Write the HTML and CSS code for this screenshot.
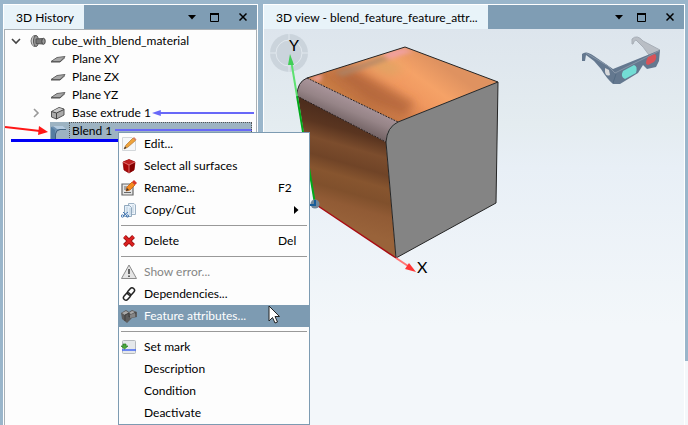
FILE: index.html
```
<!DOCTYPE html>
<html lang="en">
<head>
<meta charset="utf-8">
<title>3D History</title>
<link rel="stylesheet" href="styles.css">
</head>
<body>
<svg class="defs" aria-hidden="true">
  <symbol id="plane" viewBox="0 0 16 16"><path d="M1 10.500 7 6.500 15 5.500 10 10.500Z" fill="#a8a8a8" stroke="#666"/><path d="M1 11H10L15 6.500" fill="none" stroke="#555"/></symbol>
  <symbol id="down" viewBox="0 0 8 5"><path d="M0 0H8L4 4.500Z"/></symbol>
  <symbol id="max" viewBox="0 0 9 9"><path d="M.5 1H8.500V8.500H.5Z" fill="none" stroke="#000"/><path d="M0 1H9" stroke="#000" stroke-width="2"/></symbol>
  <symbol id="close" viewBox="0 0 8 8"><path d="M.5.5 7.500 7.500M7.500.5.5 7.500" stroke="#000" stroke-width="1.500"/></symbol>
</svg>
<main class="workspace">
  <section class="panel history">
    <header class="bar">
      <h2 class="tab">3D History</h2>
      <div class="tools">
        <button aria-label="Options"><svg width="8" height="5"><use href="#down"/></svg></button>
        <button aria-label="Maximize"><svg width="9" height="9"><use href="#max"/></svg></button>
        <button aria-label="Close"><svg width="8" height="8"><use href="#close"/></svg></button>
      </div>
    </header>
    <ul class="tree">
      <li class="root"><svg class="chev" viewBox="0 0 10 16"><path d="M1 6 5 10 9 6" fill="none" stroke="#444" stroke-width="1.600"/></svg>
        <svg class="icon" viewBox="0 0 16 16"><path d="M6 2.500H4Q1 4 1 8T4 13.500H5" fill="#ccc" stroke="#777"/><ellipse cx="6" cy="8" rx="2.500" ry="5.500" fill="#999" stroke="#555"/><path d="M6 6 13 5.500V11L6 10.500Z" fill="#777" stroke="#555"/><ellipse cx="13.500" cy="8.300" rx="1.700" ry="3" fill="#999" stroke="#444"/></svg><span>cube_with_blend_material</span></li>
      <li><span class="chev"></span><svg class="icon"><use href="#plane"/></svg><span>Plane XY</span></li>
      <li><span class="chev"></span><svg class="icon"><use href="#plane"/></svg><span>Plane ZX</span></li>
      <li><span class="chev"></span><svg class="icon"><use href="#plane"/></svg><span>Plane YZ</span></li>
      <li><svg class="chev" viewBox="0 0 10 16"><path d="M3 4 7 8 3 12" fill="none" stroke="#999" stroke-width="1.600"/></svg>
        <svg class="icon" viewBox="0 0 16 16"><path d="M1.500 6.500 9 2.500 14 4V10L6.500 14 1.500 12Z" fill="#aaa" stroke="#555"/><path d="M2 6.500 9 3 13.500 4.500 6.500 8Z" fill="#c9c9c9"/><path d="M6.500 8V14M6.500 8 14 4.500M1.500 6.500 6.500 8" fill="none" stroke="#444"/></svg><span>Base extrude 1</span>
        <svg class="flow" viewBox="0 0 104 9" preserveAspectRatio="none"><path d="M6 4H104" stroke="#6868f8" stroke-width="2"/><path d="M0 4 9 1V7Z" fill="#6868f8"/></svg></li>
      <li class="picked"><span class="chev"></span><svg class="icon" viewBox="0 0 16 16"><path d="M1 4 5 3H13L16 7H10Q6 7 6 11V16H1Z" fill="#6d91b2"/><path d="M3 3H13L16 6H7Z" fill="#b4cade"/><path d="M1 4 5 7V16H1Z" fill="#557da1"/><path d="M5.500 16V11Q6 7 10 6.500H16" fill="none" stroke="#40607f"/></svg><span class="name">Blend 1</span><svg class="pointer" viewBox="0 0 43 12"><path d="M0 2 35 6" stroke="#ff1717" stroke-width="2"/><path d="M34 1 43 7 33 10Z" fill="#ff1717"/></svg></li>
      <li class="rollback"></li>
    </ul>
  </section>
  <section class="panel view">
    <header class="bar">
      <h2 class="tab">3D view - blend_feature_feature_attr...</h2>
      <div class="tools">
        <button aria-label="Options"><svg width="8" height="5"><use href="#down"/></svg></button>
        <button aria-label="Maximize"><svg width="9" height="9"><use href="#max"/></svg></button>
        <button aria-label="Close"><svg width="8" height="8"><use href="#close"/></svg></button>
      </div>
    </header>
    <div class="scene">
      <svg class="model" width="236" height="256" viewBox="264 29 236 256" role="img" aria-label="Cube with blend">
        <defs>
          <linearGradient id="top" gradientUnits="userSpaceOnUse" x1="345" y1="112" x2="400" y2="35"><stop offset="0" stop-color="#cf8444"/><stop offset=".2" stop-color="#c47643"/><stop offset=".38" stop-color="#da8450"/><stop offset=".55" stop-color="#f0985f"/><stop offset=".75" stop-color="#f5a267"/><stop offset="1" stop-color="#df9260"/></linearGradient>
          <linearGradient id="side" gradientUnits="userSpaceOnUse" x1="365" y1="120" x2="335" y2="225"><stop offset="0" stop-color="#4d2d1d"/><stop offset=".14" stop-color="#5a3520"/><stop offset=".28" stop-color="#7c4d2d"/><stop offset=".43" stop-color="#704427"/><stop offset=".55" stop-color="#87552f"/><stop offset=".68" stop-color="#80502c"/><stop offset=".8" stop-color="#915b35"/><stop offset="1" stop-color="#99633a"/></linearGradient>
          <linearGradient id="fillet" gradientUnits="userSpaceOnUse" x1="350" y1="97" x2="340" y2="120"><stop offset="0" stop-color="#a9949a"/><stop offset=".5" stop-color="#968487"/><stop offset="1" stop-color="#766668"/></linearGradient>
          <filter id="soft"><feGaussianBlur stdDeviation="5"/></filter>
          <filter id="haze"><feGaussianBlur stdDeviation="2"/></filter>
          <clipPath id="topface"><path d="M307 78 405 47 498 82 398 122Z"/></clipPath>
        </defs>
        <circle cx="289" cy="53" r="19" fill="#cbd4dc"/><circle cx="289" cy="53" r="13" fill="none" stroke="#e1e8ee"/><path d="M289 34V40M289 66V72M270 53H276M302 53H308" stroke="#e1e8ee"/>
        <path d="M307 78 405 47 498 82 398 122Z" fill="url(#top)"/>
        <g clip-path="url(#topface)"><g filter="url(#soft)"><path d="M330 72 350 68 415 103 404 116 370 102Z" fill="#9e552f" opacity=".55"/><path d="M365 66 384 58 405 68 390 76Z" fill="#dca564" opacity=".7"/></g><g filter="url(#haze)"><path d="M334 72 382 56 390 59 343 77Z" fill="#aa8468" opacity=".7"/><path d="M382 54 402 48 414 51 390 59ZM309 78 322 74 320 82Z" fill="#f0a0a0"/></g></g>
        <path d="M298 96 386 142 396 258 315 204Z" fill="url(#side)"/>
        <path d="M307 78Q297 82 297 96L386 142Q387 126 398 122Z" fill="url(#fillet)"/>
        <path d="M398 122 498 82 496 203 396 258 386 142Q386 127 398 122Z" fill="#848484"/>
        <path d="M307 78 405 47 498 82 398 122M498 82 496 203 396 258 386 142Q387 127 398 122M307 78Q297 82 297 96" fill="none" stroke="#252525"/>
        <path d="M307 78 398 122M297 96 386 142" stroke="#292020" stroke-dasharray="2 1"/>
        <path d="M315 204 297 96" stroke="#00a91a" stroke-width="2"/><path d="M297 96 291 60" stroke="#5de171" stroke-width="2"/><path d="M290 54 294 65H288Z" fill="#41ce56"/>
        <path d="M315 204 396 258" stroke="#a90c12" stroke-width="1.500"/><path d="M396 258 408 266" stroke="#ff7474" stroke-width="2"/><path d="M416 272 409 263 405 269Z" fill="#ff3535"/>
        <circle cx="315" cy="204" r="4.500" fill="#718698"/><path d="M310 205H315V200" fill="none" stroke="#175c99" stroke-width="2"/>
        <text x="289" y="51">Y</text><text x="417" y="273">X</text>
      </svg>
      <svg class="glasses" width="80" height="50" viewBox="581 36 80 50" aria-hidden="true"><path d="M632 44V39Q637 34 643 41L660 50 649 55Q644 47 636 40Q634 40 633 44Z" fill="#b9bec5" stroke="#a7aeb7"/><path d="M582 61V54Q586 50 594 56L613 69 660 50 659 61 656 67 647 69 643 65 638 73 620 84H613Q607 79 601 69L594 61 586 55 585 61Z" fill="#64788f"/><path d="M586 53 608 66 615 73 659 51" fill="none" stroke="#8796a8"/><path d="M616 74 613 83" stroke="#536b83"/><path d="m605 68 4 2 1 5q-4 2-5-3Z" fill="#d8d9db"/><path d="M623 71 634 65Q638 66 636 73L625 79Q620 77 623 71Z" fill="#73ddd5"/><path d="M648 57 655 54Q658 57 654 62L648 65Q644 64 648 57Z" fill="#d85358"/></svg>
    </div>
  </section>
</main>
<div class="menu" role="menu">
  <button role="menuitem"><svg class="icon" viewBox="0 0 16 16"><path d="M1.500 1.500H11L14.500 5V14.500H1.500Z" fill="#f5f7f9" stroke="#d3d7da"/><path d="M3 13 5 9 12 2 14.500 4.500 7 11Z" fill="#eea33b" stroke="#b47730" stroke-width=".7"/><path d="M3 13 4 10.500 5.500 12Z" fill="#333"/><path d="m12 2 1-1 2.500 2.500-1 1Z" fill="#d87d6b"/></svg><span>Edit...</span></button>
  <button role="menuitem"><svg class="icon" viewBox="0 0 16 16"><path d="M2 4 8 1.500 14 4 13 12 8 15 3 12Z" fill="#a90808" stroke="#850000" stroke-width=".7"/><path d="M2 4 8 1.500 14 4 8 7Z" fill="#c02020"/><path d="M8 7 14 4 13 12 8 15Z" fill="#850000"/><path d="M2 4 8 7 14 4M8 7V15" fill="none" stroke="#e88" stroke-width=".8"/></svg><span>Select all surfaces</span></button>
  <button role="menuitem"><svg class="icon" viewBox="0 0 16 16"><path d="M1 4H12V15H1Z" fill="#e4e4e4" stroke="#666" stroke-width="1.200"/><path d="M3 7H6M3 9H6M3 12.500H10" stroke="#666"/><path d="M5 11 6 7 11 2 14 5 9 10Z" fill="#f58b1f" stroke="#c35500" stroke-width=".7"/><path d="m11 2 2-2 3 3-2 2Z" fill="#d9392a"/><path d="M5 11 6 8 8 10Z" fill="#443020"/></svg><span>Rename...</span><kbd>F2</kbd></button>
  <button role="menuitem"><svg class="icon" viewBox="0 0 16 16"><path d="M7.500 1.500H13L14.500 3V12.500H7.500Z" fill="#edf4fb" stroke="#9fb3c5"/><path d="M3.500 3.500H8.500L10.500 5.500V14.500H3.500Z" fill="#e1edf8" stroke="#91a8bd"/><path d="M6 5V12M9 6V13M12 3V11" stroke="#bccddb"/><g fill="none" stroke="#4678b3"><path d="M2 10 6 14M7 10 2 14"/><circle cx="1.500" cy="14" r="1.200"/><circle cx="6.500" cy="14" r="1.200"/></g></svg><span>Copy/Cut</span><svg class="more" viewBox="0 0 5 8"><path d="M0 0 4.500 4 0 8Z"/></svg></button>
  <hr>
  <button role="menuitem"><svg class="icon" viewBox="0 0 16 16"><path d="m3.500 3.500 9 9M12.500 3.500l-9 9" stroke="#8d0e0e" stroke-width="4"/><path d="m3.500 3.500 9 9M12.500 3.500l-9 9" stroke="#da2020" stroke-width="2.500"/></svg><span>Delete</span><kbd>Del</kbd></button>
  <hr>
  <button role="menuitem" disabled><svg class="icon" viewBox="0 0 16 16"><path d="M8 1 15.500 14.500H.5Z" fill="#e5e5e5" stroke="#8b8b8b" stroke-linejoin="round"/><path d="M8 5V10M8 11.500V13" stroke="#444" stroke-width="1.600"/></svg><span>Show error...</span></button>
  <button role="menuitem"><svg class="icon" viewBox="0 0 16 16"><g fill="none" stroke="#222" stroke-width="1.500"><rect x="7.500" y="1.500" width="5" height="8" rx="2.500" transform="rotate(42 10 5.500)"/><rect x="3.500" y="6.500" width="5" height="8" rx="2.500" transform="rotate(42 6 10.500)"/></g></svg><span>Dependencies...</span></button>
  <button role="menuitem" class="active"><svg class="icon" viewBox="0 0 16 16"><path d="M0 5 5 2 8 4 11 2 16 4V9L11 10 6 15 1 11Z" fill="#5c5c5c"/><path d="M1 5 5 3 8 5 4 7ZM8 5 11 3 14 4 10 6Z" fill="#aaa"/><path d="M4 7V13M4 7 8 5V9L14 6V4" fill="none" stroke="#3c3c3c"/><path d="m9 7 5-2v4l-5 1Z" fill="#858585"/></svg><span>Feature attributes...</span></button>
  <hr>
  <button role="menuitem"><svg class="icon" viewBox="0 0 16 16"><rect x="1.500" y="1.500" width="13" height="13" rx="1" fill="#e5e8eb" stroke="#b5b9bd"/><path d="M1 11H15" stroke="#4569f5" stroke-width="1.500"/><path d="M2 5H5V7H7L3.500 10 0 7H2Z" fill="#49a83a" stroke="#287d22" stroke-width=".7"/></svg><span>Set mark</span></button>
  <button role="menuitem"><span class="icon"></span><span>Description</span></button>
  <button role="menuitem"><span class="icon"></span><span>Condition</span></button>
  <button role="menuitem"><span class="icon"></span><span>Deactivate</span></button>
  <svg class="cursor" viewBox="0 0 12 19"><path d="M1 1V16L4.500 12.500 7 18 9.500 17 7 11.500H11.500Z" fill="#fff" stroke="#222"/></svg>
</div>
</body>
</html>
```
FILE: styles.css
```
* { box-sizing: border-box; }
body { margin: 0; background: #9ab6cb; color: #000; font: 12px/18px Lato, "Open Sans", sans-serif; overflow: hidden; }
button { border: 0; background: none; color: inherit; font: inherit; padding: 0; }
.defs { position: absolute; width: 0; height: 0; }
.workspace { display: grid; grid-template-columns: 255px 1fr; gap: 5px; min-height: 100vh; padding: 4px 3px 0; background: linear-gradient(#f3f7fa, #f3f7fa) right 0 top 361px / 3px 100% no-repeat; }
.panel { display: flex; flex-direction: column; min-width: 0; border: 1px solid #fff; border-bottom: 0; }
.bar { display: flex; justify-content: space-between; height: 24px; background: #7f9db4; }
.tab { margin: 0; padding: 0 10px 0 12px; background: #e8f3f9; font: inherit; line-height: 25px; white-space: nowrap; }
.tools { display: flex; align-items: center; gap: 14px; padding-right: 10px; }
.tools button { display: flex; }
.tools button:last-child { margin-left: 6px; }
.tree { flex: 1; margin: 0; padding: 2px 0 0; list-style: none; background: #fdfdfd; border: 1px solid #a9b0b5; border-bottom: 0; }
.tree li { position: relative; display: flex; align-items: center; height: 18px; padding-left: 26px; white-space: nowrap; }
.tree .root { padding-left: 6px; }
.chev { width: 10px; height: 16px; margin-right: 9px; flex: none; }
.icon { width: 16px; height: 16px; margin-right: 6px; flex: none; }
.flow { flex: 1; height: 9px; margin: 0 2px 0 1px; min-width: 0; }
.name { align-self: stretch; flex: 1; margin: 0 4px 0 -3px; padding-left: 2px; border: 1px dotted #555; background: linear-gradient(#6868f8, #6868f8) 45px 6px / 100% 2px no-repeat, #9db3c2; line-height: 16px; }
.picked .icon { height: 18px; padding: 1px 0; background: #9db3c2; box-shadow: 3px 0 #9db3c2; }
.pointer { position: absolute; left: 0; top: 3px; width: 43px; height: 12px; }
.tree .rollback { height: 3px; margin: -1px 4px 0 6px; padding: 0; background: #0000f5; }
.scene { flex: 1; display: flex; justify-content: space-between; align-items: flex-start; background: linear-gradient(#dde5ed, #e4ecf0 24%, #e8eff6 35%, #f3f7fa 75%); }
.model text { font-size: 16px; }
.glasses { margin: 7px 23px 0 0; }
.menu { position: absolute; left: 118px; top: 132px; width: 192px; background: #fdfdfd; border: 1px solid #7d9bb2; }
.menu button { display: flex; align-items: center; width: 100%; height: 22px; padding-left: 2px; text-align: left; }
.menu button:disabled { color: #858585; }
.menu .active { background: #7d9bb2; color: #fff; }
.menu .icon { margin-right: 7px; }
.menu kbd { margin-left: auto; width: 31px; font: inherit; }
.menu .more { width: 5px; height: 8px; margin: 0 10px 0 auto; }
.menu hr { height: 1px; margin: 4px 2px; border: 0; background: #999; }
.cursor { position: absolute; left: 149px; top: 172px; width: 12px; height: 19px; }
```
